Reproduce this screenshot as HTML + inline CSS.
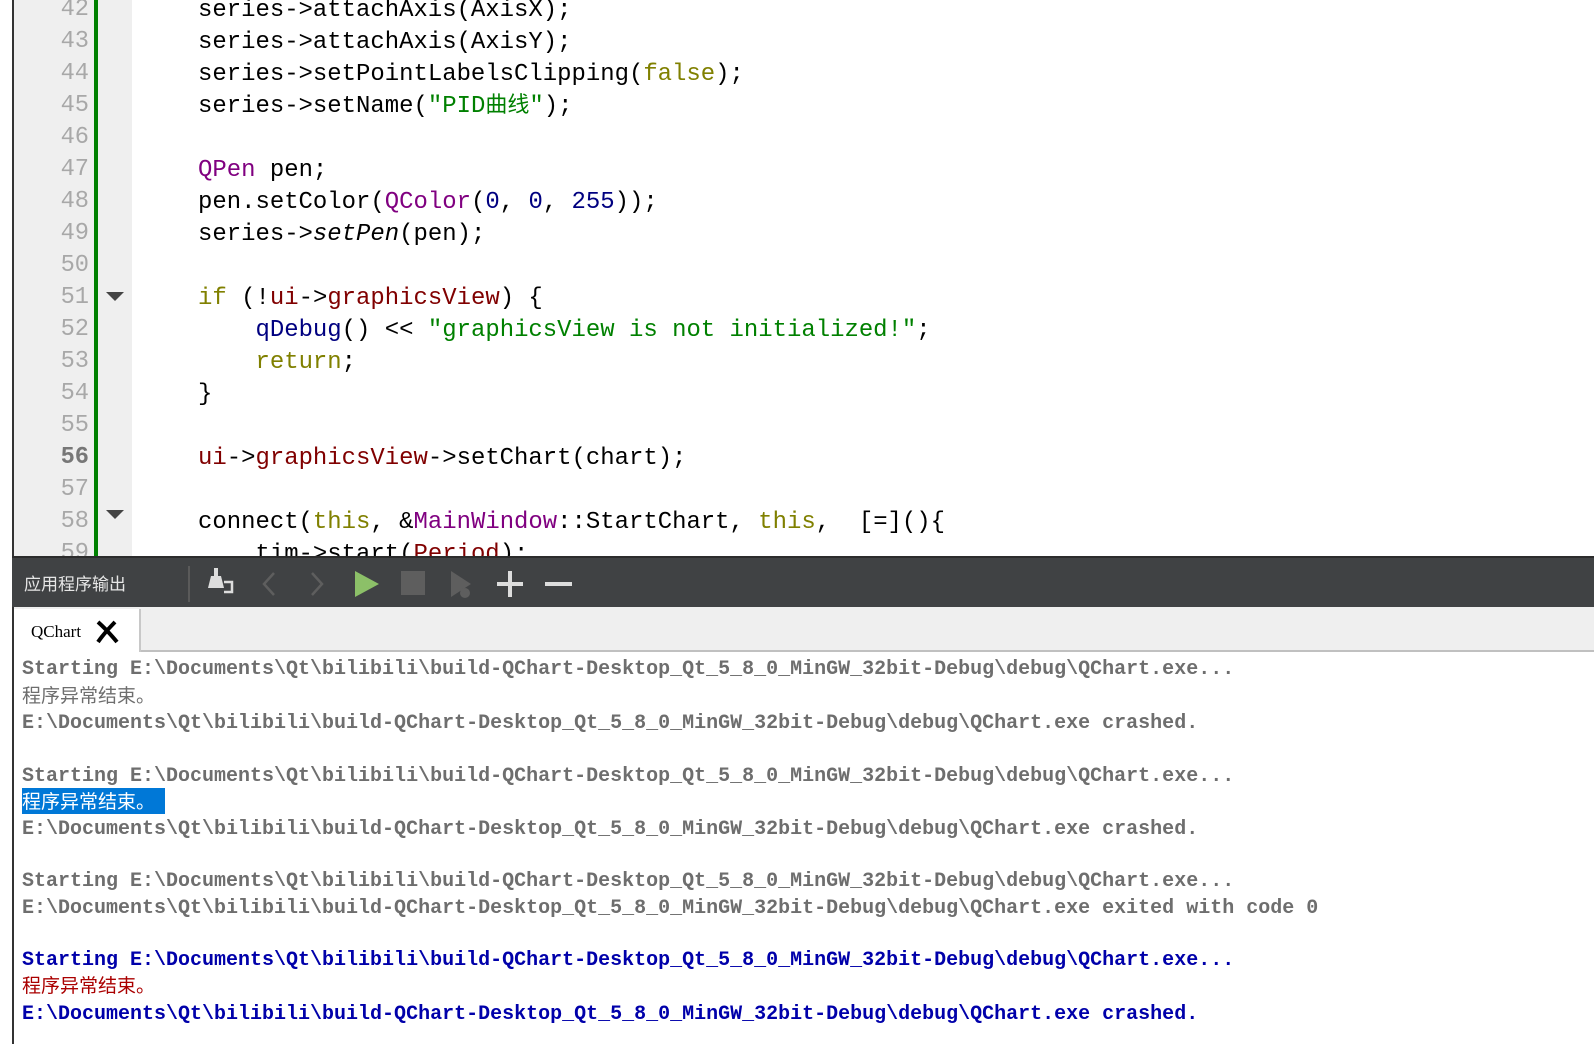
<!DOCTYPE html>
<html><head><meta charset="utf-8"><style>
*{margin:0;padding:0;box-sizing:border-box}
body{width:1594px;height:1044px;overflow:hidden;background:#fff;position:relative;font-family:"Liberation Mono","Noto Sans CJK SC",monospace}
.abs{position:absolute}
.ln{position:absolute;left:14px;width:75px;text-align:right;color:#a8a8a8;font-size:23.7px;height:32px;line-height:32px;white-space:pre}
.cd{position:absolute;left:198px;font-size:23.95px;height:32px;line-height:32px;white-space:pre;color:#000}
.kw{color:#808000}.ty{color:#800080}.nm{color:#000080}.st{color:#008000}.mb{color:#800000}.fn{color:#00677c}
.o{position:absolute;left:22px;font-size:20px;font-weight:bold;height:26px;line-height:26px;white-space:pre;color:#6e6e6e}
.cj{font-family:"Noto Sans CJK SC",sans-serif;font-weight:normal;font-size:19px}
.cjk{font-family:'Noto Sans CJK SC',sans-serif;line-height:1;font-size:22px}
</style></head><body>
<div class="abs" style="left:12px;top:0;width:2px;height:557px;background:#333"></div>
<div class="abs" style="left:14px;top:0;width:118px;height:557px;background:#efefef"></div>
<div class="abs" style="left:94px;top:0;width:4px;height:557px;background:#008000"></div>
<div class="abs" style="left:12px;top:607px;width:2px;height:437px;background:#333"></div>

<div class="ln" style="top:-6px">42</div>
<div class="ln" style="top:26px">43</div>
<div class="ln" style="top:58px">44</div>
<div class="ln" style="top:90px">45</div>
<div class="ln" style="top:122px">46</div>
<div class="ln" style="top:154px">47</div>
<div class="ln" style="top:186px">48</div>
<div class="ln" style="top:218px">49</div>
<div class="ln" style="top:250px">50</div>
<div class="ln" style="top:282px">51</div>
<div class="ln" style="top:314px">52</div>
<div class="ln" style="top:346px">53</div>
<div class="ln" style="top:378px">54</div>
<div class="ln" style="top:410px">55</div>
<div class="ln" style="top:442px;color:#777;font-weight:bold">56</div>
<div class="ln" style="top:474px">57</div>
<div class="ln" style="top:506px">58</div>
<div class="ln" style="top:538px">59</div>
<svg class="abs" style="left:106px;top:292px" width="18" height="10"><path d="M0 0H18L9 9Z" fill="#444"/></svg>
<svg class="abs" style="left:106px;top:510px" width="18" height="10"><path d="M0 0H18L9 9Z" fill="#444"/></svg>

<div class="cd" style="top:-5px">series-&gt;attachAxis(AxisX);</div>
<div class="cd" style="top:27px">series-&gt;attachAxis(AxisY);</div>
<div class="cd" style="top:59px">series-&gt;setPointLabelsClipping(<span class="kw">false</span>);</div>
<div class="cd" style="top:91px">series-&gt;setName(<span class="st">"PID<span class="cjk">曲线</span>"</span>);</div>
<div class="cd" style="top:155px"><span class="ty">QPen</span> pen;</div>
<div class="cd" style="top:187px">pen.setColor(<span class="ty">QColor</span>(<span class="nm">0</span>, <span class="nm">0</span>, <span class="nm">255</span>));</div>
<div class="cd" style="top:219px">series-&gt;<i>setPen</i>(pen);</div>
<div class="cd" style="top:283px"><span class="kw">if</span> (!<span class="mb">ui</span>-&gt;<span class="mb">graphicsView</span>) {</div>
<div class="cd" style="top:315px">    <span class="nm">qDebug</span>() &lt;&lt; <span class="st">"graphicsView is not initialized!"</span>;</div>
<div class="cd" style="top:347px">    <span class="kw">return</span>;</div>
<div class="cd" style="top:379px">}</div>
<div class="cd" style="top:443px"><span class="mb">ui</span>-&gt;<span class="mb">graphicsView</span>-&gt;setChart(chart);</div>
<div class="cd" style="top:507px">connect(<span class="kw">this</span>, &amp;<span class="ty">MainWindow</span>::StartChart, <span class="kw">this</span>,  [=](){</div>
<div class="cd" style="top:539px">    tim-&gt;start(<span class="mb">Period</span>);</div>

<!-- toolbar -->
<div class="abs" style="left:12px;top:556px;width:1582px;height:51px;background:#404244;border-top:2px solid #2c2c2c"></div>
<div class="abs" style="left:24px;top:570px;color:#e6e6e6;font-size:17px;font-family:'Noto Sans CJK SC',sans-serif;line-height:26px">应用程序输出</div>
<div class="abs" style="left:188px;top:566px;width:2px;height:36px;background:#5a5a5a"></div>
<svg class="abs" style="left:200px;top:565px" width="380" height="38">
<path d="M14 3h4v8h-4zM11 11h10l3 12H8z" fill="#ddd"/><path d="M24 17h8v10h-8" fill="none" stroke="#ddd" stroke-width="2.5"/>
<path d="M74 8L64 19l10 11" fill="none" stroke="#5e5e5e" stroke-width="2.5"/>
<path d="M112 8l10 11-10 11" fill="none" stroke="#5e5e5e" stroke-width="2.5"/>
<path d="M155 6v26l24-13z" fill="#8cc068"/>
<rect x="201" y="6" width="24" height="24" fill="#5e5e5e"/>
<path d="M251 6v26l20-13z" fill="#5e5e5e"/><circle cx="265" cy="28" r="5" fill="#5e5e5e"/>
<path d="M297 19h26M310 6v26" stroke="#ddd" stroke-width="4"/>
<path d="M345 19h27" stroke="#ddd" stroke-width="4"/>
</svg>
<!-- tabs -->
<div class="abs" style="left:14px;top:607px;width:1580px;height:45px;background:#efefef;border-bottom:2px solid #c0c0c0"></div>
<div class="abs" style="left:14px;top:609px;width:127px;height:43px;background:#fff;border-right:2px solid #c8c8c8"></div>
<div class="abs" style="left:31px;top:621px;font-family:'Liberation Serif',serif;font-size:17px;line-height:22px;color:#000">QChart</div>
<svg class="abs" style="left:95px;top:620px" width="26" height="24"><path d="M3 2Q12 10 22 22M20 2Q10 12 3 22" stroke="#000" stroke-width="4" fill="none"/></svg>

<!-- output -->
<div class="o" style="top:657px">Starting E:\Documents\Qt\bilibili\build-QChart-Desktop_Qt_5_8_0_MinGW_32bit-Debug\debug\QChart.exe...</div>
<div class="o cj" style="top:682px">程序异常结束。</div>
<div class="o" style="top:711px">E:\Documents\Qt\bilibili\build-QChart-Desktop_Qt_5_8_0_MinGW_32bit-Debug\debug\QChart.exe crashed.</div>
<div class="o" style="top:764px">Starting E:\Documents\Qt\bilibili\build-QChart-Desktop_Qt_5_8_0_MinGW_32bit-Debug\debug\QChart.exe...</div>
<div class="abs" style="left:22px;top:788px;width:143px;height:26px;background:#0078d7"></div>
<div class="o cj" style="top:788px;color:#fff">程序异常结束。</div>
<div class="o" style="top:817px">E:\Documents\Qt\bilibili\build-QChart-Desktop_Qt_5_8_0_MinGW_32bit-Debug\debug\QChart.exe crashed.</div>
<div class="o" style="top:869px">Starting E:\Documents\Qt\bilibili\build-QChart-Desktop_Qt_5_8_0_MinGW_32bit-Debug\debug\QChart.exe...</div>
<div class="o" style="top:896px">E:\Documents\Qt\bilibili\build-QChart-Desktop_Qt_5_8_0_MinGW_32bit-Debug\debug\QChart.exe exited with code 0</div>
<div class="o" style="top:948px;color:#0000aa">Starting E:\Documents\Qt\bilibili\build-QChart-Desktop_Qt_5_8_0_MinGW_32bit-Debug\debug\QChart.exe...</div>
<div class="o cj" style="top:972px;color:#aa0000">程序异常结束。</div>
<div class="o" style="top:1002px;color:#0000aa">E:\Documents\Qt\bilibili\build-QChart-Desktop_Qt_5_8_0_MinGW_32bit-Debug\debug\QChart.exe crashed.</div>
</body></html>
